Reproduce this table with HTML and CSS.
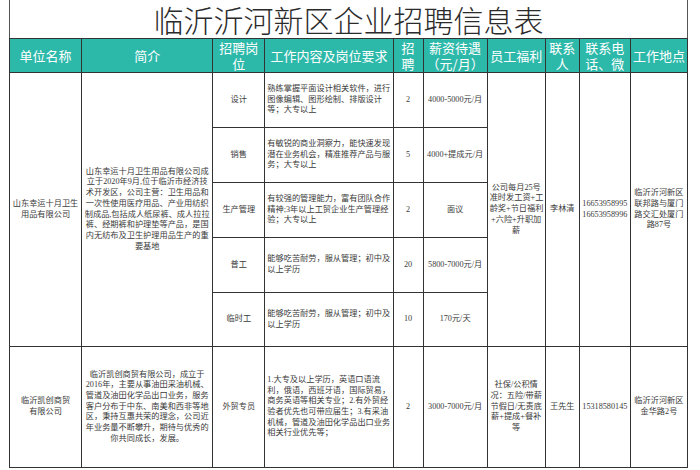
FILE: index.html
```html
<!DOCTYPE html>
<html lang="zh-CN">
<head>
<meta charset="utf-8">
<link rel="stylesheet" href="styles.css">
</head>
<body>
<div class="sheet">
  <div class="title"><span>临沂沂河新区企业招聘信息表</span></div>
  <table class="grid">
    <colgroup>
      <col class="c1"><col class="c2"><col class="c3"><col class="c4"><col class="c5">
      <col class="c6"><col class="c7"><col class="c8"><col class="c9"><col class="c10">
    </colgroup>
    <thead>
      <tr class="head">
        <th>单位名称</th>
        <th>简介</th>
        <th>招聘岗<br>位</th>
        <th>工作内容及岗位要求</th>
        <th>招<br>聘</th>
        <th>薪资待遇<br>（元/月）</th>
        <th>员工福利</th>
        <th>联系<br>人</th>
        <th>联系电<br>话、微</th>
        <th>工作地点</th>
      </tr>
    </thead>
    <tbody>
      <tr class="r55">
        <td rowspan="5" class="ctr">山东幸运十月卫生<br>用品有限公司</td>
        <td rowspan="5" class="ctr nw">山东幸运十月卫生用品有限公司成<br>立于2020年9月,位于临沂市经济技<br>术开发区，公司主营：卫生用品和<br>一次性使用医疗用品、产业用纺织<br>制成品,包括成人纸尿裤、成人拉拉<br>裤、经期裤和护理垫等产品，是国<br>内无纺布及卫生护理用品生产的重<br>要基地</td>
        <td class="ctr">设计</td>
        <td class="lft nw">熟练掌握平面设计相关软件，进行<br>图像编辑、图形绘制、排版设计<br>等；大专以上</td>
        <td class="ctr">2</td>
        <td class="ctr nw">4000-5000元/月</td>
        <td rowspan="5" class="ctr nw">公司每月25号<br>准时发工资+工<br>龄奖+节日福利<br>+六险+升职加<br>薪</td>
        <td rowspan="5" class="ctr">李林清</td>
        <td rowspan="5" class="ctr nw">16653958995<br>16653958996</td>
        <td rowspan="5" class="ctr nw">临沂沂河新区<br>联邦路与厦门<br>路交汇处厦门<br>路87号</td>
      </tr>
      <tr class="r55">
        <td class="ctr">销售</td>
        <td class="lft nw">有敏锐的商业洞察力，能快速发现<br>潜在业务机会，精准推荐产品与服<br>务；大专以上</td>
        <td class="ctr">5</td>
        <td class="ctr nw">4000+提成元/月</td>
      </tr>
      <tr class="r55">
        <td class="ctr">生产管理</td>
        <td class="lft nw">有较强的管理能力，富有团队合作<br>精神;3年以上工贸企业生产管理经<br>验；大专以上</td>
        <td class="ctr">2</td>
        <td class="ctr">面议</td>
      </tr>
      <tr class="r55">
        <td class="ctr">普工</td>
        <td class="lft nw">能够吃苦耐劳，服从管理；初中及<br>以上学历</td>
        <td class="ctr">20</td>
        <td class="ctr nw">5800-7000元/月</td>
      </tr>
      <tr class="r54">
        <td class="ctr">临时工</td>
        <td class="lft nw">能够吃苦耐劳，服从管理；初中及<br>以上学历</td>
        <td class="ctr">10</td>
        <td class="ctr nw">170元/天</td>
      </tr>
      <tr class="r121">
        <td class="ctr">临沂凯创商贸<br>有限公司</td>
        <td class="ctr nw">临沂凯创商贸有限公司，成立于<br>2016年，主要从事油田采油机械、<br>管道及油田化学品出口业务，服务<br>客户分布于中东、南美和西非等地<br>区，秉持互惠共荣的理念，公司近<br>年业务量不断攀升，期待与优秀的<br>你共同成长，发展。</td>
        <td class="ctr">外贸专员</td>
        <td class="lft nw">1.大专及以上学历，英语口语流<br>利，俄语，西班牙语，国际贸易，<br>商务英语等相关专业；2.有外贸经<br>验者优先也可带应届生；3.有采油<br>机械，管道及油田化学品出口业务<br>相关行业优先等；</td>
        <td class="ctr">2</td>
        <td class="ctr nw">3000-7000元/月</td>
        <td class="ctr nw">社保/公积情<br>况：五险/带薪<br>节假日/无责底<br>薪+提成+餐补<br>等</td>
        <td class="ctr">王先生</td>
        <td class="ctr nw">15318580145</td>
        <td class="ctr nw">临沂沂河新区<br>金华路2号</td>
      </tr>
    </tbody>
  </table>
</div>
</body>
</html>
```

FILE: styles.css
```css
html, body {
  margin: 0;
  padding: 0;
  background: #ffffff;
}

.sheet {
  margin-left: 9px;
  width: 679px;
}

.title {
  height: 38px;
  display: flex;
  align-items: center;
  justify-content: center;
  border-left: 1px solid #555;
  border-right: 1px solid #555;
  font-family: "Noto Sans CJK SC", sans-serif;
  font-weight: 300;
  font-size: 30px;
  line-height: 34px;
  color: #2b2b2b;
  box-sizing: border-box;
}

.grid {
  width: 679px;
  border-collapse: collapse;
  table-layout: fixed;
}

.c1 { width: 72px; }
.c2 { width: 131px; }
.c3 { width: 52px; }
.c4 { width: 128px; }
.c5 { width: 30px; }
.c6 { width: 64px; }
.c7 { width: 58px; }
.c8 { width: 34px; }
.c9 { width: 51px; }
.c10 { width: 57px; }

.grid th,
.grid td {
  border: 1px solid #333;
  padding: 0 2px;
  vertical-align: middle;
  overflow: hidden;
}

.head th {
  height: 33px;
  background: #2db9aa;
  color: #ffffff;
  font-family: "Noto Sans CJK SC", sans-serif;
  font-weight: 400;
  font-size: 13px;
  line-height: 16px;
  text-align: center;
  padding: 0;
  white-space: nowrap;
}

.grid td {
  font-family: "Liberation Serif", "Noto Sans CJK SC", serif;
  font-size: 8.2px;
  line-height: 10.7px;
  color: #3a3a3a;
}

.r55 td { height: 54px; }
.r54 td { height: 53px; }
.r121 td { height: 120px; }

.ctr { text-align: center; }
.lft { text-align: left; }
.nw { white-space: nowrap; }
```
